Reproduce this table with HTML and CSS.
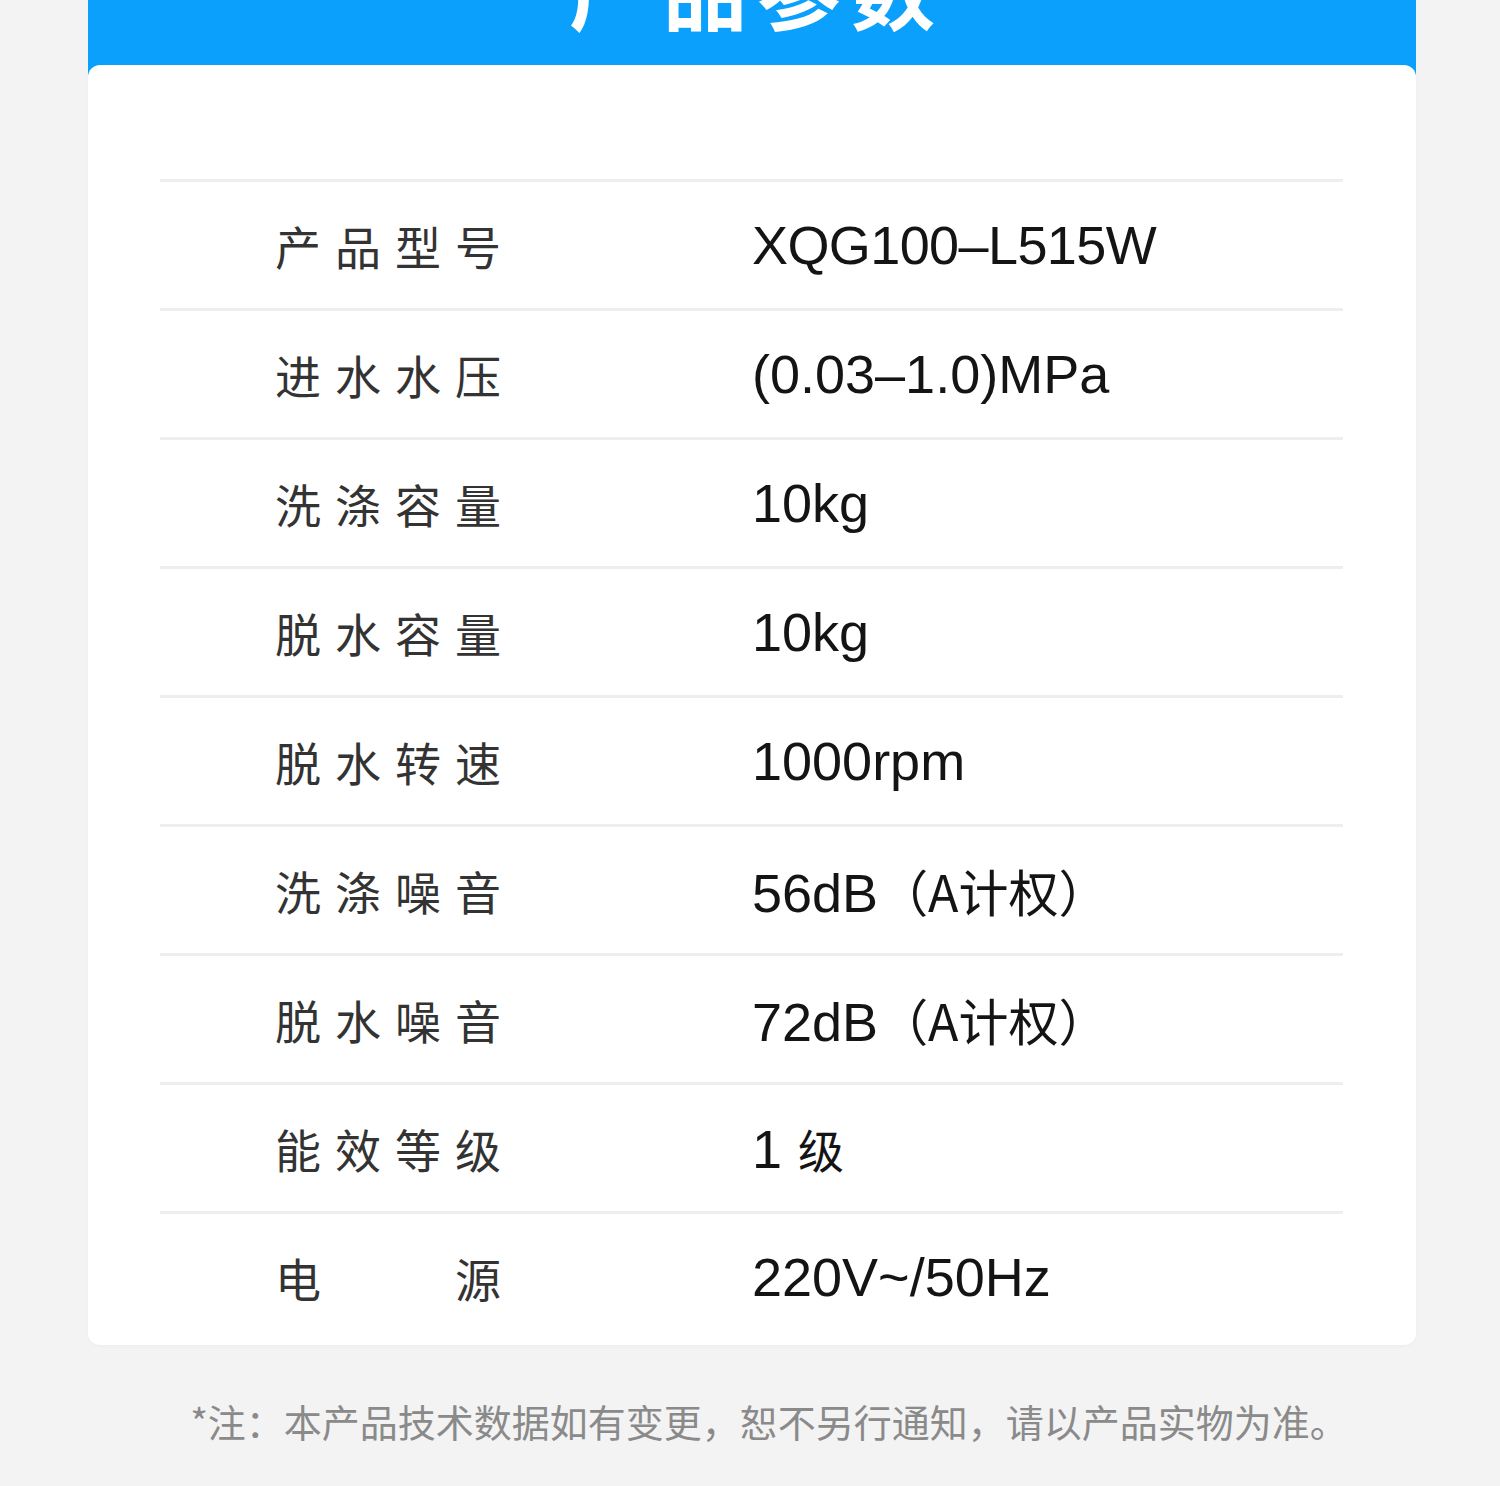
FILE: index.html
```html
<!DOCTYPE html>
<html lang="zh-CN">
<head>
<meta charset="utf-8">
<title>产品参数</title>
<link rel="stylesheet" href="styles.css">
</head>
<body>
<div class="panel">
  <div class="panel-head">
    <h1 class="title">产品参数</h1>
  </div>
  <div class="card">
    <div class="specs">
      <div class="row"><div class="label">产品型号</div><div class="value model">XQG100–L515W</div></div>
      <div class="row"><div class="label">进水水压</div><div class="value">(0.03–1.0)MPa</div></div>
      <div class="row"><div class="label">洗涤容量</div><div class="value">10kg</div></div>
      <div class="row"><div class="label">脱水容量</div><div class="value">10kg</div></div>
      <div class="row"><div class="label">脱水转速</div><div class="value">1000rpm</div></div>
      <div class="row"><div class="label">洗涤噪音</div><div class="value">56dB<span class="cjk">（A计权）</span></div></div>
      <div class="row"><div class="label">脱水噪音</div><div class="value">72dB<span class="cjk">（A计权）</span></div></div>
      <div class="row"><div class="label">能效等级</div><div class="value">1<span class="cjk grade">级</span></div></div>
      <div class="row"><div class="label label-split"><span>电</span><span>源</span></div><div class="value">220V~/50Hz</div></div>
    </div>
  </div>
</div>
<p class="note">*注：本产品技术数据如有变更，恕不另行通知，请以产品实物为准。</p>
</body>
</html>
```

FILE: styles.css
```css
html, body {
  margin: 0;
  padding: 0;
}
body {
  background: #f3f3f3;
  font-family: "Noto Sans CJK SC", "Noto Sans", sans-serif;
  overflow: hidden;
}
.panel {
  width: 1328px;
  margin: 0 0 0 88px;
  background: linear-gradient(#0aa0fb 0, #0aa0fb 80px, transparent 80px);
}
.panel-head {
  height: 65px;
  overflow: hidden;
}
.title {
  margin: -54px 0 0;
  text-align: center;
  color: #fff;
  font-size: 84px;
  line-height: 1;
  font-weight: 700;
  letter-spacing: 10px;
  text-indent: 10px;
}
.card {
  background: #fff;
  border-radius: 12px;
  padding: 114px 73px 5px 72px;
  box-shadow: 0 1px 3px rgba(0,0,0,0.03);
}
.row {
  display: flex;
  align-items: center;
  height: 129px;
  box-sizing: border-box;
  border-top: 3px solid #eeeeee;
  padding-left: 115px;
}
.label {
  width: 477px;
  flex: none;
  font-size: 46px;
  color: #333333;
  letter-spacing: 14px;
  font-weight: 400;
}
.label-split {
  display: flex;
  justify-content: space-between;
  width: 226px;
  margin-right: 251px;
  letter-spacing: 0;
}
.value {
  font-family: "Liberation Sans", Arial, sans-serif;
  font-size: 54px;
  color: #141414;
}
.model {
  letter-spacing: -0.6px;
}
.cjk {
  font-family: "Noto Sans CJK SC", sans-serif;
  font-size: 50px;
  font-weight: 400;
}
.grade {
  font-size: 46px;
  margin-left: 16px;
}
.note {
  margin: 48px 0 0;
  text-align: center;
  font-size: 38px;
  color: #8a8a8a;
  padding-left: 38px;
}
```
